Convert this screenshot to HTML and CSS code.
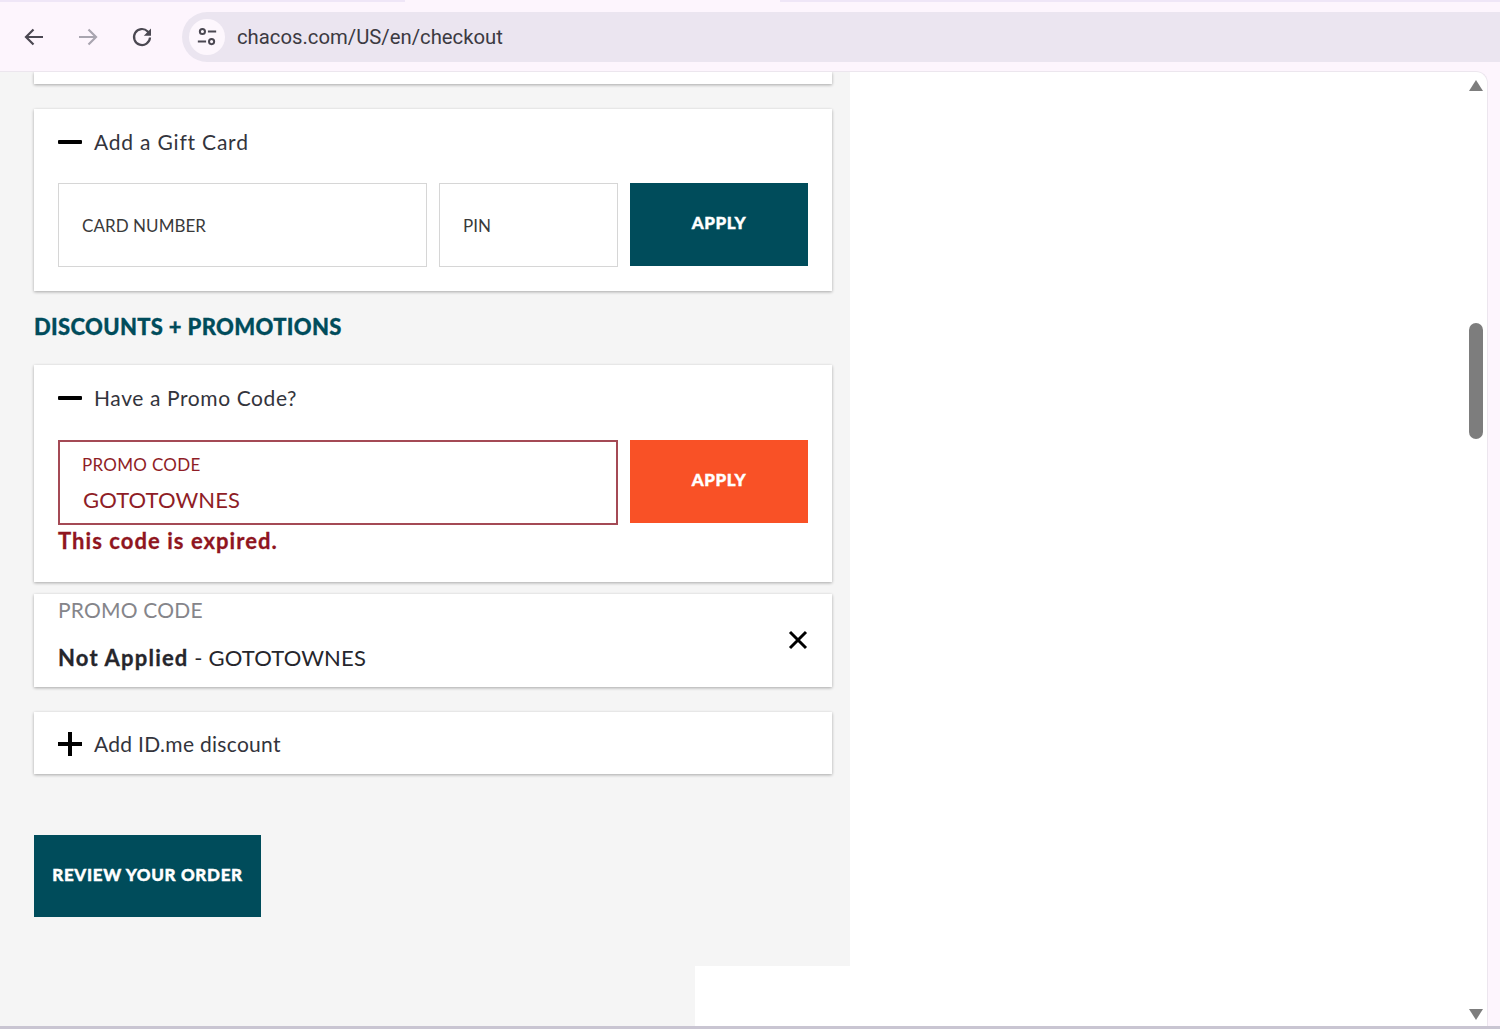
FILE: index.html
```html
<!DOCTYPE html>
<html lang="en">
<head>
<meta charset="utf-8">
<title>Checkout</title>
<link rel="stylesheet" href="styles.css">
</head>
<body>
<div class="window">
  <div class="tabstrip"></div>
  <header class="toolbar">
    <nav class="nav">
      <svg class="navicon" viewBox="0 0 24 24"><path d="M21 12H4.5M11.5 4.5L4 12l7.5 7.5" class="stroke dark"/></svg>
      <svg class="navicon" viewBox="0 0 24 24"><path d="M3 12h16.5M12.5 4.5L20 12l-7.5 7.5" class="stroke faint"/></svg>
      <svg class="navicon" viewBox="0 0 24 24"><path d="M20 12.5a8 8 0 1 1-2.3-6.1L20 9" class="stroke dark"/><path d="M21 3.5v7.2h-7.2z" class="fill dark"/></svg>
    </nav>
    <div class="omnibox">
      <span class="siteinfo">
        <svg viewBox="0 0 24 24" class="tune"><circle cx="7" cy="6" r="2.8" class="stroke dark"/><path d="M13 6h9M2 17h9" class="stroke dark"/><circle cx="17" cy="17" r="2.8" class="stroke dark"/></svg>
      </span>
      <span class="url">chacos.com/US/en/checkout</span>
    </div>
  </header>
  <div class="viewport">
    <main class="checkout">
      <section class="card stub"></section>
      <section class="card gift">
        <div class="acc"><span class="minus"></span><span class="acc-title wider">Add a Gift Card</span></div>
        <div class="row">
          <div class="field wide"><span class="ph">CARD NUMBER</span></div>
          <div class="field narrow"><span class="ph">PIN</span></div>
          <button class="btn apply">APPLY</button>
        </div>
      </section>
      <h2 class="section-title">DISCOUNTS + PROMOTIONS</h2>
      <section class="card promo">
        <div class="acc"><span class="minus"></span><span class="acc-title">Have a Promo Code?</span></div>
        <div class="row">
          <div class="field error">
            <span class="float">PROMO CODE</span>
            <span class="val">GOTOTOWNES</span>
          </div>
          <button class="btn apply hot">APPLY</button>
        </div>
        <p class="errmsg">This code is expired.</p>
      </section>
      <section class="card applied">
        <div>
          <div class="applied-label">PROMO CODE</div>
          <div class="applied-val"><b>Not Applied</b> - GOTOTOWNES</div>
        </div>
        <svg class="close" viewBox="0 0 20 20"><path d="M2 2l16 16M18 2L2 18"/></svg>
      </section>
      <section class="card idme">
        <div class="acc"><span class="plus"></span><span class="acc-title narrower">Add ID.me discount</span></div>
      </section>
      <button class="btn review">REVIEW YOUR ORDER</button>
    </main>
    <div class="patch"></div>
    <div class="scrollbar">
      <span class="arrow up"></span>
      <span class="thumb"></span>
      <span class="arrow down"></span>
    </div>
  </div>
</div>
</body>
</html>
```

FILE: styles.css
```css
* { box-sizing: border-box; }
html, body { margin: 0; height: 100%; }
body { background: #fdf5fd; font-family: "Lato", "Liberation Sans", sans-serif; overflow: hidden; color: #26262c; }
.window { height: 1029px; display: flex; flex-direction: column; border-bottom: 3px solid #c9c5d2; }
.tabstrip { height: 2px; background: linear-gradient(90deg, #efe6f7 405px, #fdf5fd 405px, #fdf5fd 780px, #efe6f7 780px); flex: none; }
.toolbar { height: 69px; flex: none; display: flex; align-items: center; }
.nav { display: flex; gap: 30px; padding-left: 22px; width: 182px; }
.navicon { width: 24px; height: 24px; flex: none; }
.stroke { fill: none; stroke-width: 2.2; }
.dark.stroke { stroke: #4b4852; }
.faint.stroke { stroke: #a9a5b0; }
.fill.dark { fill: #4b4852; }
.omnibox { flex: 1; height: 50px; background: #ebe5f0; border-radius: 25px 0 0 25px; display: flex; align-items: center; padding-left: 7px; }
.siteinfo { width: 36px; height: 36px; border-radius: 50%; background: #fdf7fd; display: flex; align-items: center; justify-content: center; }
.tune { width: 22px; height: 22px; }
.url { font-family: "Roboto", sans-serif; font-size: 20.3px; color: #3c3a42; margin-left: 12px; }
.viewport { flex: 1; position: relative; background: #fff; margin-right: 12px; border-top: 1px solid #ece6ee; border-right: 1px solid #ece6ee; border-top-right-radius: 12px; overflow: hidden; }
.checkout { width: 850px; height: 100%; background: #f5f5f5; padding: 0 18px 0 34px; }
.card { background: #fff; box-shadow: 0 1px 3px rgba(0,0,0,.32); }
.stub { height: 12px; margin-bottom: 25px; }
.gift { height: 182px; padding: 21px 24px 0; }
.acc { display: flex; align-items: center; height: 24px; gap: 12px; }
.acc-title { font-size: 21px; letter-spacing: .6px; color: #33343c; line-height: 24px; }
.wider { letter-spacing: .8px; }
.narrower { letter-spacing: .3px; }
.minus { width: 24px; height: 4px; background: #000; flex: none; border-radius: 1px; }
.plus { width: 24px; height: 24px; flex: none; position: relative; }
.plus::before, .plus::after { content: ""; position: absolute; background: #000; }
.plus::before { left: 0; right: 0; top: 10px; height: 4px; }
.plus::after { top: 0; bottom: 0; left: 10px; width: 4px; }
.row { display: flex; gap: 12px; margin-top: 29px; align-items: flex-start; }
.field { height: 84px; background: #fff; border: 1px solid #d6d6d6; padding: 0 23px; display: flex; align-items: center; }
.wide { width: 369px; }
.narrow { width: 179px; }
.ph { font-size: 17px; color: #3a3a3a; letter-spacing: .05px; padding-top: 1px; }
.btn { border: 0; background: #004c5b; color: #fff; font-family: inherit; font-weight: 900; margin: 0; -webkit-text-stroke: .4px #fff; padding: 0 0 4px; }
.apply { width: 178px; height: 83px; font-size: 17px; letter-spacing: .6px; }
.hot { background: #f95126; }
.section-title { font-size: 22px; font-weight: 900; color: #004c5b; margin: 24px 0 26px; line-height: 24px; letter-spacing: .33px; -webkit-text-stroke: .3px #004c5b; }
.promo { height: 217px; padding: 21px 24px 0; }
.promo .row { margin-top: 30px; }
.error { width: 560px; height: 85px; border: 2px solid #a44a55; position: relative; color: #8f1d26; }
.float { position: absolute; left: 22px; top: 13px; font-size: 17px; letter-spacing: .3px; line-height: 20px; }
.val { position: absolute; left: 23px; top: 44px; font-size: 22px; letter-spacing: .1px; line-height: 28px; }
.errmsg { margin: 3px 0 0; font-size: 22px; font-weight: 700; color: #8f1520; line-height: 26px; letter-spacing: 1.05px; -webkit-text-stroke: .3px #8f1520; }
.applied { height: 93px; margin-top: 12px; padding: 3px 24px 0; display: flex; justify-content: space-between; position: relative; }
.applied-label { font-size: 21px; color: #85858a; line-height: 26px; letter-spacing: .2px; }
.applied-val { font-size: 22px; line-height: 28px; margin-top: 21px; color: #26262c; letter-spacing: .15px; }
.applied-val b { letter-spacing: 1.2px; -webkit-text-stroke: .3px #26262c; }
.close { width: 20px; height: 20px; position: absolute; right: 24px; top: 36px; fill: none; stroke: #000; stroke-width: 3; }
.idme { height: 62px; margin-top: 25px; padding: 20px 24px 0; }
.review { display: block; margin-top: 61px; width: 227px; height: 82px; font-size: 17px; letter-spacing: .65px; }
.patch { position: absolute; left: 695px; top: 894px; width: 155px; bottom: 0; background: #fff; }
.scrollbar { position: absolute; right: 1px; top: 0; bottom: 0; width: 20px; }
.arrow { position: absolute; left: 3px; width: 0; height: 0; border-left: 7px solid transparent; border-right: 7px solid transparent; }
.up { top: 8px; border-bottom: 11px solid #7d7d7d; }
.down { bottom: 6px; border-top: 11px solid #7d7d7d; }
.thumb { position: absolute; left: 3px; top: 251px; width: 14px; height: 116px; border-radius: 7px; background: #7d7d7d; }
```
